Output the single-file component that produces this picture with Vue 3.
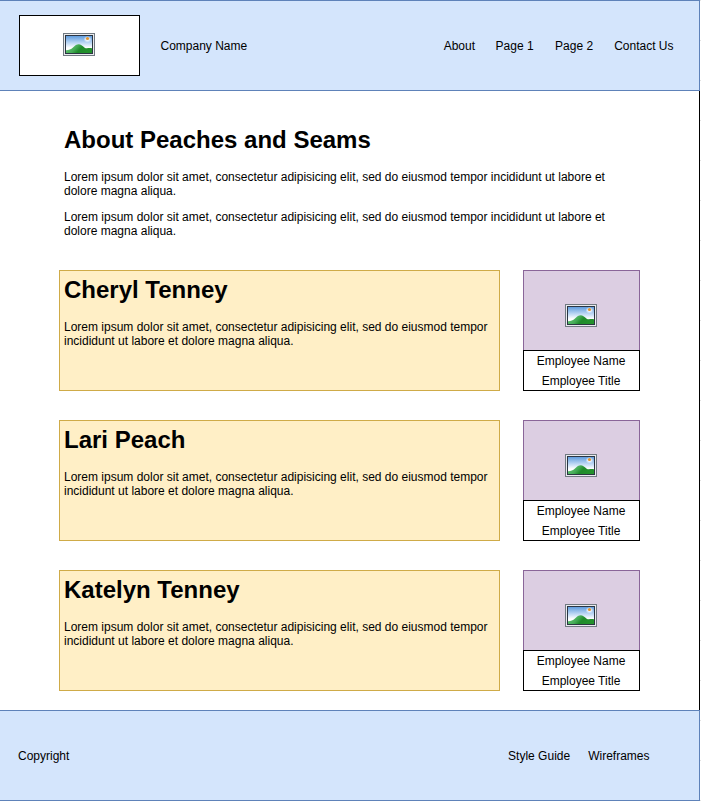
<script setup>
import { h } from 'vue'

const intro = [
  'Lorem ipsum dolor sit amet, consectetur adipisicing elit, sed do eiusmod tempor incididunt ut labore et',
  'dolore magna aliqua.',
]
const bio = [
  'Lorem ipsum dolor sit amet, consectetur adipisicing elit, sed do eiusmod tempor',
  'incididunt ut labore et dolore magna aliqua.',
]
const nav = ['About', 'Page 1', 'Page 2', 'Contact Us']
const people = ['Cheryl Tenney', 'Lari Peach', 'Katelyn Tenney']

const stop = (offset, color, opacity = 1) =>
  h('stop', { offset, 'stop-color': color, 'stop-opacity': opacity })

const PictureIcon = () =>
  h('svg', { width: 32, height: 23, viewBox: '0 0 32 23' }, [
    h('defs', [
      h('linearGradient', { id: 'sky', x1: 0, y1: 0, x2: 0, y2: 1 }, [
        stop(0, '#609cdd'),
        stop(0.4, '#bcd7f4'),
        stop(0.7, '#ffffff'),
      ]),
      h('linearGradient', { id: 'hill', x1: 0, y1: 0, x2: 1, y2: 0.3 }, [
        stop(0, '#6acb7c'),
        stop(0.45, '#45ab56'),
        stop(0.65, '#1f8b2b'),
        stop(1, '#23912c'),
      ]),
      h('radialGradient', { id: 'glow' }, [
        stop(0, '#ffffff', 0.95),
        stop(0.5, '#ffffff', 0.7),
        stop(1, '#ffffff', 0),
      ]),
    ]),
    h('rect', { x: 0.5, y: 0.5, width: 31, height: 22, fill: '#e9ebee', stroke: '#717981' }),
    h('rect', { x: 2, y: 2, width: 28, height: 19, fill: '#2c3542' }),
    h('rect', { x: 3, y: 3, width: 26, height: 17, fill: 'url(#sky)' }),
    h('rect', { x: 20.5, y: 3, width: 8, height: 6.5, fill: 'url(#glow)' }),
    h('path', {
      d: 'M3 17.2C6 17.2 8 16.5 10 14.6C12 12.4 14 11.2 16 11.3C18.5 11.5 20 13.8 22 14.9C24 15.7 26 14.6 29 15.2V20H3Z',
      fill: 'url(#hill)',
    }),
    h('circle', { cx: 24.5, cy: 5.5, r: 1.6, fill: '#e3942f' }),
  ])
</script>

<template>
  <div class="page">
    <header class="bar">
      <div class="logo"><PictureIcon /></div>
      <span class="company">Company Name</span>
      <nav class="nav">
        <a v-for="item in nav" :key="item">{{ item }}</a>
      </nav>
    </header>

    <main class="main">
      <section class="intro">
        <h1>About Peaches and Seams</h1>
        <p v-for="n in 2" :key="n">
          <span v-for="line in intro" :key="line" class="line">{{ line }}</span>
        </p>
      </section>

      <section v-for="name in people" :key="name" class="row">
        <article class="bio">
          <h2>{{ name }}</h2>
          <p>
            <span v-for="line in bio" :key="line" class="line">{{ line }}</span>
          </p>
        </article>
        <aside class="card">
          <div class="photo"><PictureIcon /></div>
          <div class="caption">
            <span>Employee Name</span>
            <span>Employee Title</span>
          </div>
        </aside>
      </section>
    </main>

    <footer class="bar footer">
      <span>Copyright</span>
      <nav class="links">
        <a>Style Guide</a>
        <a>Wireframes</a>
      </nav>
    </footer>
  </div>
</template>

<style>
body {
  margin: 0;
  background: #fff;
}
</style>

<style scoped>
.page {
  width: 701px;
  height: 801px;
  overflow: hidden;
  box-sizing: border-box;
  padding-right: 1px;
  display: flex;
  flex-direction: column;
  font-family: "Liberation Sans", Arial, sans-serif;
  font-size: 12px;
  line-height: 14px;
  color: #000;
  background: linear-gradient(#e4e4e4 1px, transparent 1px) right top / 1px 40px repeat-y #fff;
}
.page * {
  box-sizing: border-box;
}
svg {
  display: block;
}
.bar {
  flex: none;
  height: 91px;
  display: flex;
  align-items: center;
  background: #d4e5fc;
  border: 1px solid #5e82b9;
  border-left: 0;
  padding-left: 19px;
}
.logo {
  width: 121px;
  height: 61px;
  padding: 17px 0 0 43px;
  border: 1px solid #000;
  background: #fff;
}
.company {
  margin-left: 20.5px;
}
.nav {
  margin-left: auto;
  padding-right: 25.5px;
  display: flex;
  gap: 21px;
}
.nav a:first-child {
  margin-right: -0.5px;
}
.nav a:nth-child(2) {
  margin-right: 0.5px;
}
.main {
  flex: none;
  height: 619px;
  border-right: 1px solid #000;
  padding-left: 59px;
  background: #fff;
}
.intro {
  height: 179px;
  padding: 35px 0 0 5px;
}
h1,
h2 {
  margin: 0;
  font-size: 24px;
  line-height: 28px;
  font-weight: bold;
  white-space: nowrap;
}
p {
  margin: 0;
}
.intro h1 {
  margin-bottom: 16px;
}
.intro p + p {
  margin-top: 12px;
}
.line {
  display: block;
  white-space: nowrap;
}
.row {
  display: flex;
  gap: 23px;
  margin-bottom: 29px;
}
.row:last-child {
  margin-bottom: 0;
}
.bio {
  width: 441px;
  height: 121px;
  padding: 5px 4px 4px;
  background: #ffefc6;
  border: 1px solid #cfab48;
}
.bio h2 {
  margin-bottom: 16px;
}
.card {
  width: 117px;
  height: 121px;
}
.photo {
  height: 80px;
  padding: 33px 0 0 41px;
  background: #dccee2;
  border: 1px solid #8a6699;
  border-bottom: 0;
}
.caption {
  height: 41px;
  padding-right: 1px;
  border: 1px solid #000;
  background: #fff;
  display: flex;
  flex-direction: column;
  text-align: center;
  line-height: 20px;
}
.footer {
  justify-content: space-between;
  padding-left: 18px;
  padding-right: 49.5px;
}
.links {
  display: flex;
  gap: 18px;
}
</style>
